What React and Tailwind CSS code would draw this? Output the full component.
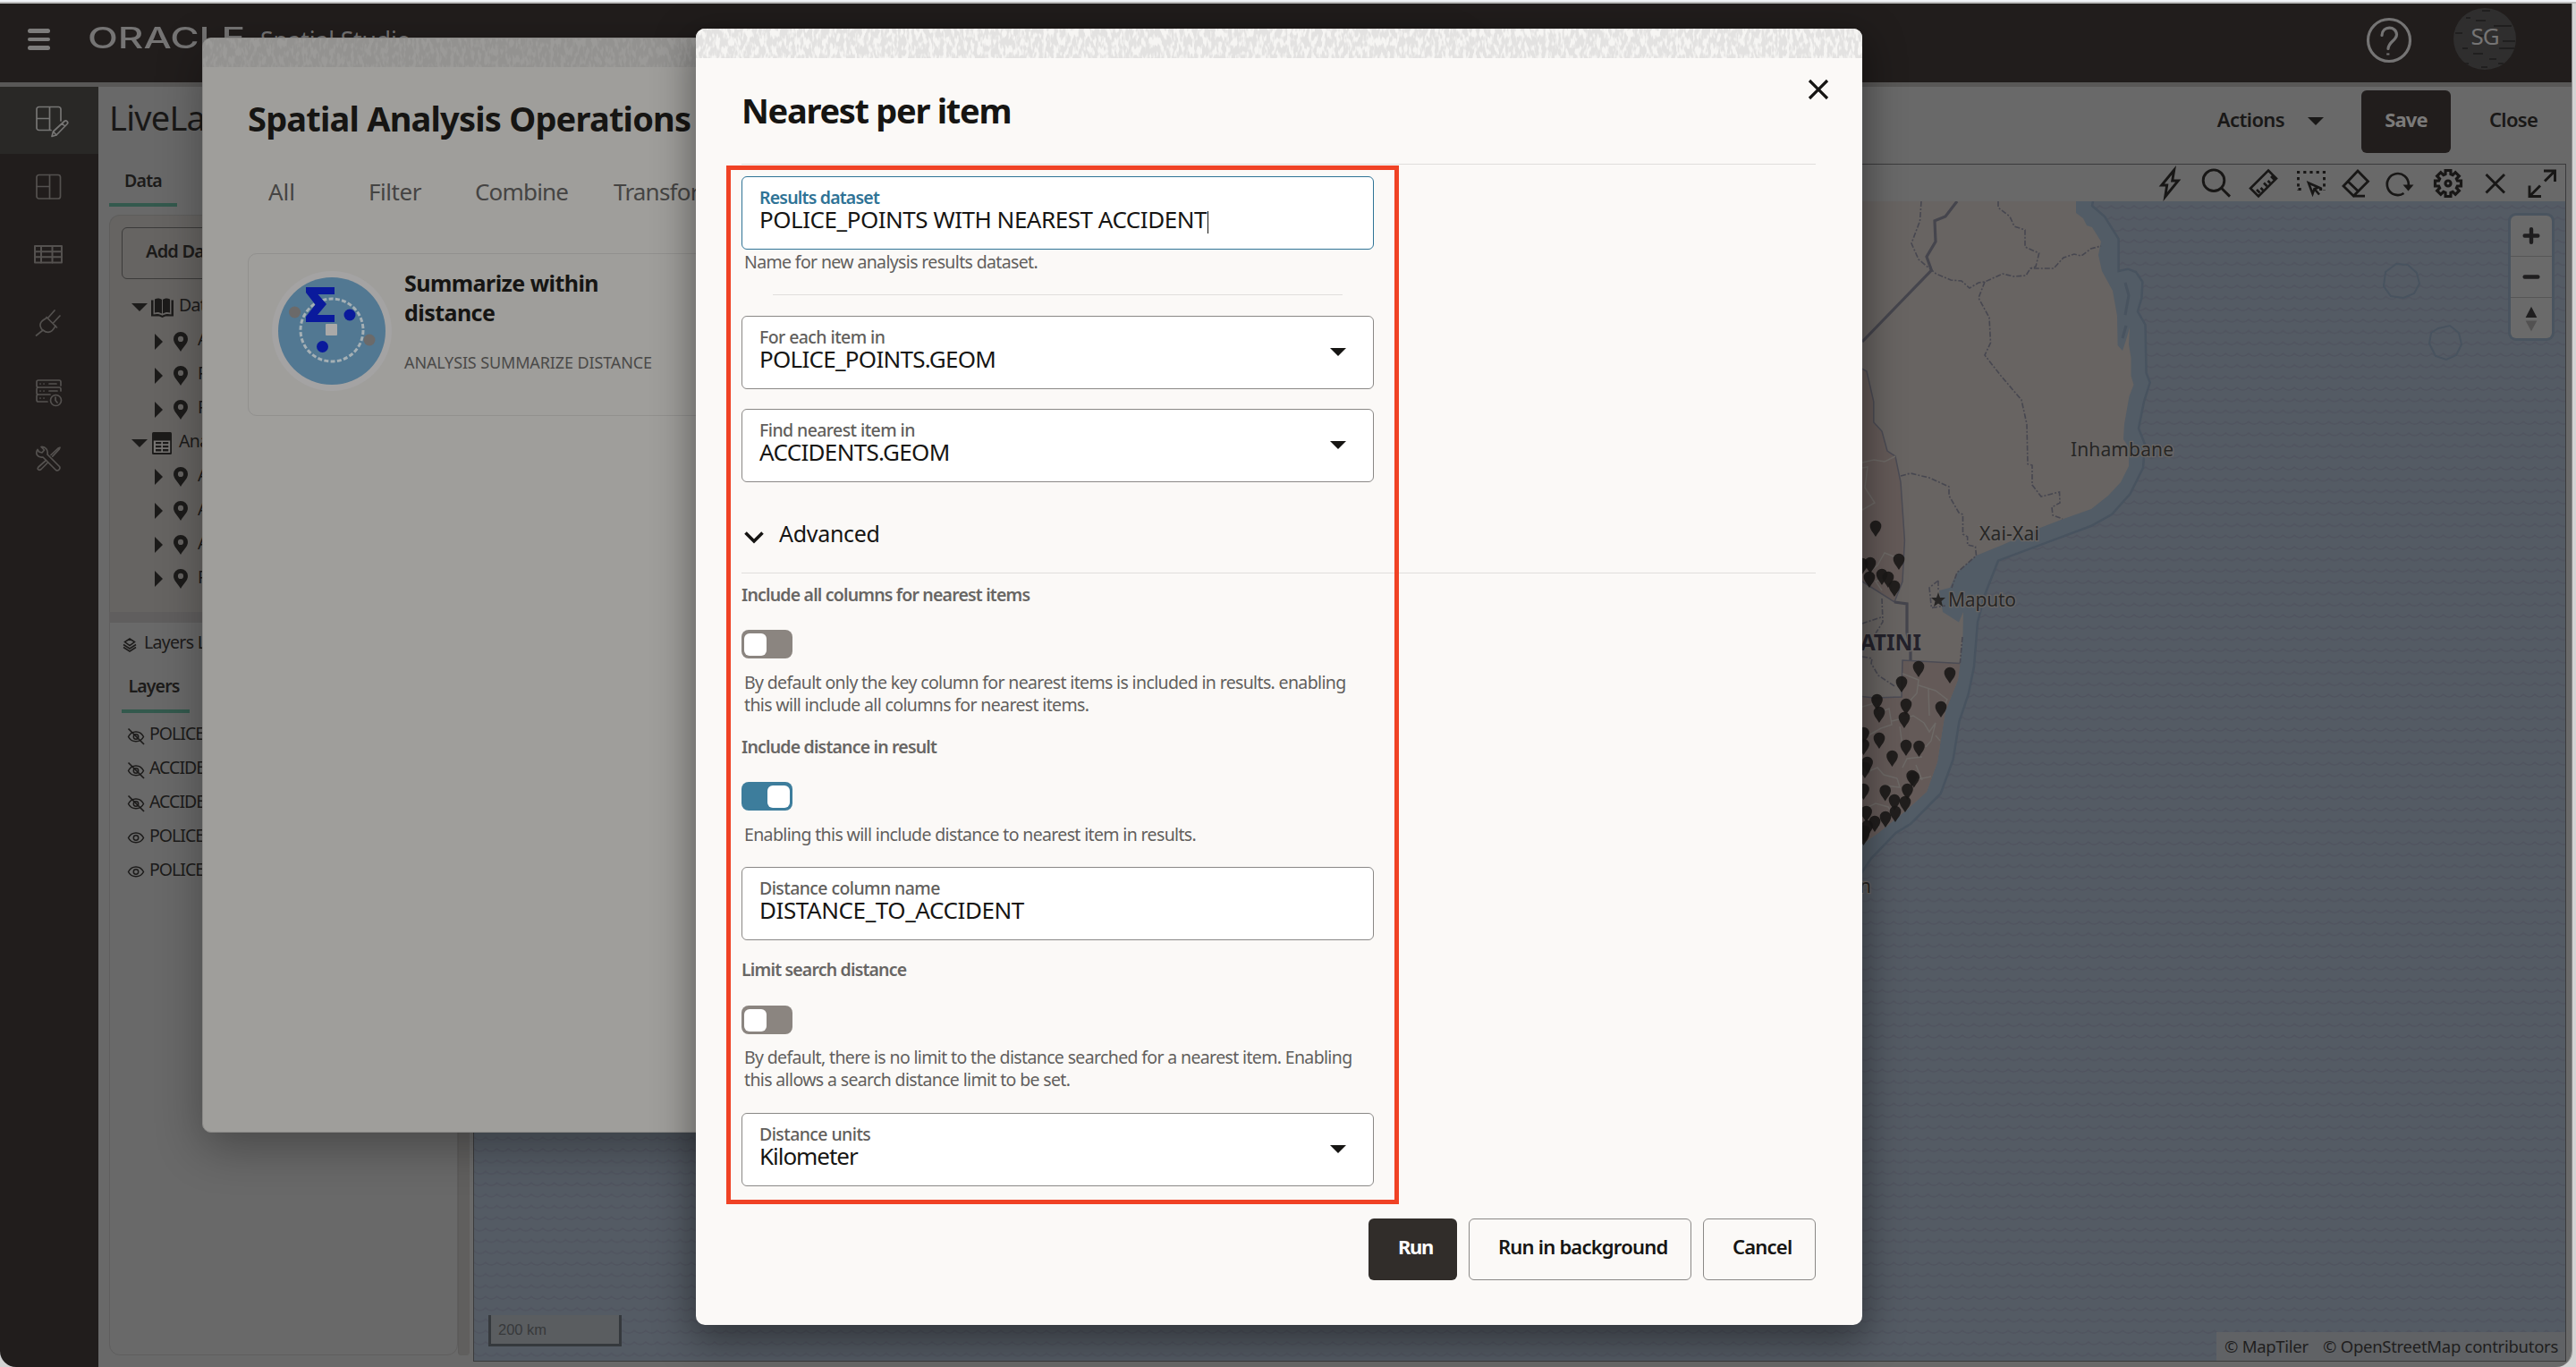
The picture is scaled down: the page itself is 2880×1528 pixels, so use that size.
import React from "react";

const SANS = "font-['Noto_Sans','Open_Sans',sans-serif]";

/* ---------- small shared pieces ---------- */

function Caret({ className = "" }) {
  return (
    <svg viewBox="0 0 18 9" className={`h-[9px] w-[18px] shrink-0 ${className}`}>
      <path d="M0 0H18L9 9Z" fill="currentColor" />
    </svg>
  );
}

function Texture({ id, color, className }) {
  return (
    <svg className={className} preserveAspectRatio="none">
      <filter id={id} x="0" y="0" width="100%" height="100%" colorInterpolationFilters="sRGB">
        <feTurbulence type="fractalNoise" baseFrequency="0.26 0.1" numOctaves="2" seed="11" result="n" />
        <feColorMatrix in="n" type="matrix" values="0 0 0 0 1  0 0 0 0 1  0 0 0 0 1  6 0 0 0 -2.300" result="m" />
        <feFlood floodColor={color} />
        <feComposite operator="in" in2="m" />
      </filter>
      <rect width="100%" height="100%" filter={`url(#${id})`} />
    </svg>
  );
}

/* ---------- side navigation ---------- */

const iconProps = { fill: "none", stroke: "currentColor", strokeWidth: 1.7, strokeLinejoin: "round", strokeLinecap: "round" };

function EditProjectIcon() {
  return (
    <svg viewBox="0 0 40 40" className="h-10 w-10" {...iconProps}>
      <path d="M28 18V5a2.5 2.5 0 0 0-2.500-2.500H3.500A2.500 2.500 0 0 0 1 5v21a2.500 2.500 0 0 0 2.500 2.500H17M15.500 2.500v26M1 15.500h14.500" />
      <path d="m18 35.500 1.500-5.500L32 18.500a2.200 2.200 0 0 1 3.200 3L23 34ZM29.500 21l3 3M19.500 30l3.500 4" />
    </svg>
  );
}
function ProjectIcon() {
  return (
    <svg viewBox="0 0 40 40" className="h-10 w-10" {...iconProps}>
      <rect x="1" y="2.500" width="26.500" height="26.500" rx="2.500" />
      <path d="M15.500 2.500V29M1 15.500h14.500" />
    </svg>
  );
}
function TableIcon() {
  return (
    <svg viewBox="0 0 40 40" className="h-10 w-10" {...iconProps} strokeWidth="2">
      <rect x="-1" y="6" width="30" height="18.500" />
      <path d="M-1 12.200h30M-1 18.300h30M6 6v18.500M18.500 6v18.500" />
    </svg>
  );
}
function PlugIcon() {
  return (
    <svg viewBox="0 0 40 40" className="h-10 w-10" {...iconProps}>
      <path d="m12 9.500 11.500 11.500M21 2l-7.500 8.500M27 8l-7.500 8M8 24.500C2 18 5.500 14 12 10.500M8 24c6.500 5 11 1.500 14-5M8 24l-7.500 6" />
    </svg>
  );
}
function JobsIcon() {
  return (
    <svg viewBox="0 0 40 40" className="h-10 w-10" {...iconProps}>
      <path d="M13 28H3a2 2 0 0 1-2-2v-4a2 2 0 0 1 2-2h11M3 12a2 2 0 0 1-2-2V6a2 2 0 0 1 2-2h23a2 2 0 0 1 2 2v4M3 12h23a2 2 0 0 1 2 2v2M3 12a2 2 0 0 0-2 2v4a2 2 0 0 0 2 2h13" />
      <path d="M5 8h.1M9 8h.1M5 16h.1M9 16h.1M5 24h.1M9 24h.1M15 8h8M15 16h9" />
      <circle cx="22.500" cy="26.500" r="6" />
      <path d="M22 23v3.500l2 2.500" />
    </svg>
  );
}
function ToolsIcon() {
  return (
    <svg viewBox="0 0 40 40" className="h-10 w-10" {...iconProps}>
      <path d="M6 2.500 9.500 6 7 9 3.500 8 2 5.500C-1 10 2 15 8 14L22.500 28.500c2.500 1.500 5.500-1.500 4-4L13 11c1-5-2-9-7-8.500Z" />
      <path d="m17 11.500 8-7.500 2-.800-.8 2-7.500 8M11.500 17.500 3 25c-2 2.500.5 4.500 3 2.500l7.500-7.500" />
    </svg>
  );
}

function SideNav() {
  const items = [EditProjectIcon, ProjectIcon, TableIcon, PlugIcon, JobsIcon, ToolsIcon];
  return (
    <nav className="flex w-[110px] shrink-0 flex-col bg-[#211d1c]">
      {items.map((Icon, i) => (
        <div
          key={i}
          className={
            i === 0
              ? "flex h-[75px] items-start bg-[#292826] pt-[20px] pl-10 text-[#767574]"
              : "flex h-[76px] items-start pt-[21px] pl-10 text-[#54514f]"
          }
        >
          <div className="[&>svg]:overflow-visible">
            <Icon />
          </div>
        </div>
      ))}
    </nav>
  );
}

/* ---------- header ---------- */

function Header() {
  return (
    <header className="flex h-[93px] shrink-0 items-start border-b-[5px] border-[#595857] bg-[#211d1c] text-[#757474]">
      <div className="mt-[28px] ml-[31px] flex w-[25px] flex-col gap-[5px]">
        <div className="h-[4.500px] rounded-full bg-[#7d7c7b]" />
        <div className="h-[4.500px] rounded-full bg-[#7d7c7b]" />
        <div className="h-[4.500px] rounded-full bg-[#7d7c7b]" />
      </div>
      <div className="mt-[18px] ml-[42px] w-[193px] font-['Inter',sans-serif] text-[32px] leading-[42px] font-medium">
        <span className="inline-block origin-left scale-x-[1.380]">ORACLE</span>
      </div>
      <div className="mt-[22px] text-[26.500px] leading-[38px] tracking-[-0.005em]">Spatial Studio</div>
      <div className="mr-[62px] ml-auto flex items-start gap-[46px]">
        <svg viewBox="0 0 52 52" className="mt-[15px] h-[52px] w-[52px]" fill="none" stroke="currentColor" strokeWidth="3.200">
          <circle cx="26" cy="26" r="23.500" />
          <path d="M18 20.500c.5-11 16-11 16.500-1 0 7-9 7.500-9.500 16" strokeLinecap="round" />
          <path d="M24.800 40.500v2" />
        </svg>
        <div className="relative mt-[5px] flex h-[69px] w-[70px] justify-center overflow-hidden rounded-full bg-[#2f2e2e]">
          <svg viewBox="0 0 70 70" className="absolute inset-0" stroke="#201f1f" strokeWidth="2" fill="none">
            <path d="M32 3h9M25 14h11M45 20h20M2 28h8M28 31h6M55 37h14M10 45h6M51 45h17M22 51h11M40 57h8M12 62h5M50 62h6M31 66h7M14 11h5" />
          </svg>
          <span className="relative mt-[12px] text-[26px] leading-[38px] tracking-[-0.040em]">SG</span>
        </div>
      </div>
    </header>
  );
}

/* ---------- left data / layers panels ---------- */

function PinIcon() {
  return (
    <svg viewBox="0 0 16 22" className="h-[22px] w-4 shrink-0">
      <path fillRule="evenodd" fill="currentColor" d="M8 0a8 8 0 0 1 8 8c0 5-5 8.500-8 14C5 16.500 0 13 0 8a8 8 0 0 1 8-8Zm0 4.800a3.100 3.100 0 1 0 0 6.200 3.100 3.100 0 0 0 0-6.200Z" />
    </svg>
  );
}

function TreeGroup({ icon, label }) {
  return (
    <div className="flex h-[37.900px] items-center">
      <Caret className="ml-[11px]" />
      <div className="mr-[6px] ml-1 flex w-[25px]">{icon}</div>
      <span className="pb-[5px] text-[19.500px] leading-[28px] tracking-[-0.035em] whitespace-nowrap">{label}</span>
    </div>
  );
}

function TreeLeaf({ label }) {
  return (
    <div className="flex h-[37.900px] items-center">
      <svg viewBox="0 0 9 18" className="ml-[37px] h-[18px] w-[9px] shrink-0">
        <path d="M0 0 9 9 0 18Z" fill="currentColor" />
      </svg>
      <div className="mr-[11px] ml-[12px] flex">
        <PinIcon />
      </div>
      <span className="pb-[5px] text-[19.500px] leading-[28px] tracking-[-0.035em] whitespace-nowrap">{label}</span>
    </div>
  );
}

function EyeIcon({ off }) {
  return (
    <svg viewBox="0 0 20 20" className="h-5 w-5 shrink-0" fill="none" stroke="currentColor" strokeWidth="1.500">
      <path d="M1.500 10.500C5 3 15 3 18.500 10.500 15 17.500 5 17.500 1.500 10.500Z" />
      <circle cx="10" cy="10.500" r="2.700" />
      {off && <path d="M1.500 1.500 19 19" strokeWidth="1.700" />}
    </svg>
  );
}

function LeftPanels() {
  const layers = [
    ["POLICE_POINTS", true],
    ["ACCIDENTS", true],
    ["ACCIDENTS", true],
    ["POLICE_POINTS", false],
    ["POLICE_BOUNDS", false],
  ];
  return (
    <div className="flex w-[403px] shrink-0 flex-col text-[#1c1b1a]">
      <div className="flex h-[48px] w-[76px] justify-center border-b-4 border-[#33594d] pt-[4px] text-[19.500px] leading-[30px] font-semibold tracking-[-0.040em]">
        Data
      </div>
      <div className="mt-[9px] flex h-[1275px]">
        <div className="flex w-[390px] flex-col">
          <section className="h-[444px] overflow-hidden rounded-t-xl border border-b-0 border-[#5e5d5c] bg-[#666462] pt-[13px] pl-[13px]">
            <div className="flex h-[58px] w-[220px] items-center rounded-md border border-[#3c3b3a] pl-[26px] text-[20px] font-semibold tracking-[-0.040em]">
              <span className="pb-[4px]">Add Dataset</span>
            </div>
            <div className="mt-[13px]">
              <TreeGroup
                label="Datasets"
                icon={
                  <svg viewBox="0 0 25 22" className="h-[22px] w-[25px]" fill="currentColor">
                    <path d="M4 1.500C7 0 10 .5 12 2v15.500C9.500 16 7 15.500 4 16.500ZM21 1.500C18 0 15 .5 13 2v15.500c2.500-1.500 5-2 8-1ZM0 2.500h2.500v16c4-1 7-.5 10 1.300 3-1.800 6-2.300 10-1.300v-16H25v18h-9l-3.500 1.500-3.500-1.500H0Z" />
                  </svg>
                }
              />
              <TreeLeaf label="ACCIDENTS" />
              <TreeLeaf label="POLICE_BOUNDS" />
              <TreeLeaf label="POLICE_POINTS" />
              <TreeGroup
                label="Analyses"
                icon={
                  <svg viewBox="0 0 22 25" className="ml-px h-[25px] w-[22px]">
                    <rect width="22" height="25" rx="1.500" fill="currentColor" />
                    <path d="M1.800 9.500H20.200V23H1.800Z" fill="#777573" />
                    <path d="M4 11h6.300v2.300H4Zm8 0h6.300v2.300H12Zm-8 4h6.300v2.300H4Zm8 0h6.300v2.300H12Zm-8 4h6.300v2.500H4Zm8 0h6.300v2.500H12Z" fill="currentColor" />
                  </svg>
                }
              />
              <TreeLeaf label="ACCIDENTS" />
              <TreeLeaf label="ACCIDENTS" />
              <TreeLeaf label="ACCIDENTS" />
              <TreeLeaf label="POLICE_POINTS" />
            </div>
          </section>
          <div className="h-[11px] bg-[#605e5e]" />
          <section className="flex-1 overflow-hidden rounded-b-xl border border-[#5f5e5e] pl-[13px]">
            <div className="mt-[8px] flex items-center gap-[8px] pl-[1px]">
              <svg viewBox="0 0 16 16" className="mt-[5px] h-4 w-4" fill="none" stroke="currentColor" strokeWidth="1.500">
                <path d="M8 1 13.500 4.500 8 8.500 2.500 4.500ZM1 7.500l7 4.500 7-4.500M1 10.500 8 15l7-4.500" />
              </svg>
              <span className="text-[19.500px] leading-[28px] tracking-[-0.035em] whitespace-nowrap">Layers List</span>
            </div>
            <div className="mt-[23px] flex h-[42px] text-[19.500px] leading-[24px] tracking-[-0.045em]">
              <div className="flex w-[76px] justify-center border-b-4 border-[#33594d] pr-1 font-semibold">Layers</div>
              <div className="ml-[13px]">Legend</div>
            </div>
            <div className="mt-[7px] flex flex-col">
              {layers.map(([name, off], i) => (
                <div key={i} className="flex h-[37.800px] items-center gap-[5px] pl-[6px]">
                  <EyeIcon off={off} />
                  <span className="pb-[5px] text-[19.500px] leading-[28px] tracking-[-0.050em] whitespace-nowrap">{name}</span>
                </div>
              ))}
            </div>
          </section>
        </div>
        <div className="w-[13px] rounded-b-[4px] border-l border-[#5c5b5a] bg-[#605f5e]" />
      </div>
    </div>
  );
}

/* ---------- map ---------- */

const gear = (() => {
  const pts = [];
  const step = (Math.PI * 2) / 8;
  for (let i = 0; i < 8; i++) {
    const a = i * step - Math.PI / 2;
    [[-0.28, 10.8], [-0.2, 14.800], [0.2, 14.800], [0.28, 10.8]].forEach(([d, r]) =>
      pts.push(`${(15 + r * Math.cos(a + d)).toFixed(1)},${(16 + r * Math.sin(a + d)).toFixed(1)}`),
    );
  }
  return pts.join(" ");
})();

function MapToolbar() {
  const icons = [
    <path d="M20.700 1 6.700 18h6l-2 13L25.300 13h-6.600Z" />,
    <>
      <circle cx="13" cy="12.700" r="11.800" />
      <path d="m21.500 21.200 9.500 9.400" />
    </>,
    <path d="M22 1.500 31 10.500 11 30.500 2 21.500ZM9 23l3.500 3.500M13.500 21l2.500 2.500M17 15.500l3.500 3.500M21.500 13l2.500 2.500M25 8l3.500 3.500" strokeWidth="2.600" />,
    <>
      <path d="M2 3.500H34M3.500 9V24M32.500 9V24M3.500 22.500h7M27 22.500h4" strokeDasharray="3.200 4" />
      <path d="m15 15.500 11.500 5-5 1.500-2 5.500Zm6 6 6 7" strokeWidth="2.600" />
    </>,
    <path d="m18 2 11.500 11.700L13.300 30 2 19ZM7 13.700l11.500 11M13.300 30.200H26" strokeWidth="2.800" />,
    <>
      <path d="M17.500 27a12 12 0 1 1 5.300-10v2" strokeWidth="2.700" />
      <path d="M16.500 17.500h12l-6 7Z" fill="currentColor" stroke="none" />
    </>,
    <>
      <polygon points={gear} strokeWidth="3.200" />
      <circle cx="15" cy="16" r="3" strokeWidth="3.200" />
    </>,
    <path d="M5.500 6 26 26.500M26 6 5.500 26.500" />,
    <path d="M18 2H30.500V14M30 2.500 19 13.500M2 18.500v12h13M2.500 30 14 18.500" />,
  ];
  return (
    <div className="flex h-[41px] shrink-0 items-center justify-end gap-5 pr-[10px] text-[#181716]">
      {icons.map((icon, i) => (
        <svg key={i} viewBox="0 0 32 32" className="h-8 w-8 overflow-visible" fill="none" stroke="currentColor" strokeWidth="2.900">
          {icon}
        </svg>
      ))}
    </div>
  );
}

const PINS = [
  [2098, 588], [2124, 625], [2092, 629], [2083, 630], [2091, 645], [2105, 642], [2112, 645], [2119, 655],
  [2146, 745], [2181, 752], [2127, 762], [2099.5, 782], [2102, 796], [2132, 787], [2171, 790], [2130, 802],
  [2084.5, 819], [2084.5, 832], [2102, 825], [2132, 833], [2146.5, 834], [2116.5, 845], [2088.6, 852], [2086, 858],
  [2138.7, 867], [2140.8, 868.5], [2084.5, 882], [2108.7, 883.5], [2133.5, 882], [2119, 894], [2131, 896],
  [2087.6, 907], [2120, 907], [2109, 913], [2097, 918], [2088.6, 923], [2085.5, 929], [2084.5, 933],
];

const COAST =
  "L2322 225 2322 238 2330 244 2334 252 2340 254 2350 270 2347 285 2351 303 2363 325 2368 353 2368.600 386 2374 392 2378 380 2382 366 2381 385 2383.500 400 2383.500 420 2386.500 430 2381.500 443 2376 474 2375 491 2381 500 2381 521 2372 539 2358 554 2339 569 2308 580 2282 590 2240 609 2210.500 621 2189 640 2181 657 2169 660 2173 684 2191 695.500 2196 684 2195.500 711 2192.400 741.500 2190 760 2176 795 2171 826 2167 852 2155 885 2132 906 2101 931 2078 947";
const SHELF =
  "L2341 225 2340 230 2354 242 2369.600 267 2369.600 303 2380 300.700 2389 304 2396.400 315 2395.400 333 2391 348 2399.500 363 2400.600 417 2404.700 427.600 2398 449 2392 479 2399 496.500 2397 523 2382.500 552 2362 575 2338.600 588 2235 626.700 2220 665 2212 695.500 2208 745 2201.700 776 2191.400 806.500 2184.700 848.600 2170.700 887 2137 921 2120.600 931 2093 959.600 2078 982";

function MapCanvas() {
  return (
    <svg viewBox="531 225 2338 1296" className="block h-full w-full">
      <defs>
        <pattern id="waves" width="12.800" height="12.700" patternUnits="userSpaceOnUse" x="531" y="225">
          <path d="M-1 5.500 0 5Q6.400 11 12.800 5l1 .5" fill="none" stroke="#50545f" strokeWidth="1.700" />
        </pattern>
      </defs>
      <rect x="531" y="225" width="2338" height="1296" fill="#545b64" />
      <rect x="531" y="225" width="2338" height="1296" fill="url(#waves)" />
      <path d={`M2070 225${SHELF}L2070 990Z`} fill="#525c66" />
      <path d={`M2341 225${SHELF.slice(9)}`} fill="none" stroke="#48535f" strokeWidth="2.500" />
      <path d="M2680 295 2693 296 2703 305 2706 317 2700 328 2688 333 2674 331 2666 320 2668 304Z" fill="none" stroke="#48535f" strokeWidth="2" />
      <path d="M2727 367 2740 364 2750 372 2753 385 2747 397 2736 402 2724 398 2717 384 2719 372Z" fill="none" stroke="#48535f" strokeWidth="2" />
      <path d={`M2070 225${COAST}Z`} fill="#686462" />
      <path d="M2377 316 2381 330 2377 352M2378 364 2374 378" fill="none" stroke="#48535f" strokeWidth="3" />
      <path d="M2060 400 2088 415 2095.800 449 2095.800 472 2105 482 2111 504 2120 510 2126 539 2130.400 604 2128 650 2119 673 2083 650 2060 640Z" fill="#645a58" stroke="#4b4b54" strokeWidth="1.500" />
      <path d="M2060 776 2096 780 2127 779 2128 738 2192.400 741.500 2190 760 2176 795 2171 826 2167 852 2155 885 2132 906 2101 931 2078 947 2060 950Z" fill="#645a58" />
      <path d="M2060 776 2096 780 2127 779 2128 738 2192.400 741.500" fill="none" stroke="#4b4b54" strokeWidth="1.500" />
      <path d="M2083 517 2096 514 2108 516 2120 510M2083 523 2089 522 2086 545 2097 562 2083 570M2090 640 2100 632 2108 618 2118 622 2127 622M2105 660 2098 650 2110 646M2083 790 2100 785 2098 798 2113 792 2116 810 2104 814 2090 822M2128 753 2146 760 2144 775 2130 790M2146 766 2165 772 2178 782 2174 790M2157 770 2158 800M2116 806 2140 800 2152 808 2158 818 2165 808 2160 828 2154 835M2125 812 2128 835M2165 822 2170 828M2128 858 2133 848 2150 846M2083 865 2100 858 2107 866 2122 870M2122 870 2125 880 2108 878M2150 872 2143 855M2160 868 2140 872M2083 905 2098 898 2112 902 2118 912M2095 915 2102 925" fill="none" stroke="#6d6966" strokeWidth="1.500" />
      <g fill="none" stroke="#474750" strokeWidth="1.600" strokeDasharray="6 2 2 2">
        <path d="M2149 225 2147.500 247 2138 272 2146 290 2165.600 306 2182 313 2194 314 2203 322 2213 316 2220 315 2240 306 2252 309 2266 308 2271 300 2297 300 2308 288 2320 284 2328 286 2338.600 278 2350 275" />
        <path d="M2235 225V232L2248 242 2253 253 2265 257V276L2280.700 283 2277 298 2271 300" />
        <path d="M2220 315 2213 333 2225 355 2226.500 383 2220 397 2238 420 2261 447 2267 474 2268 518.700 2273 520V542L2283 555 2303.500 550 2304 562 2295 567 2296 576 2307 580" />
        <path d="M2126 532 2137 529 2158 534 2180 544V554L2191 573 2195.500 575V597L2200.700 600V609L2209.500 611 2210.500 621 2189 640 2183 657" />
        <path d="M2168 649 2158 657 2160.400 679.500 2176 677M2168 649V660M2105 669 2106 695 2098 708M2083 697 2104 690M2083 734 2094 736 2093 741.500 2101 755 2120 767.500M2195 712 2192.400 741" />
      </g>
      <path d="M2189 225 2176 242 2164 246.700 2165 270 2155 287 2160.400 302 2083 382M2119 673 2133 675V707L2137 726V738" fill="none" stroke="#45454d" strokeWidth="3.200" />
      <g className="font-['Noto_Sans',sans-serif]" fill="#272625">
        <g stroke="#6a6765" strokeWidth="2.500" paintOrder="stroke" fontSize="21">
          <text x="2316" y="510" textLength="115">Inhambane</text>
          <text x="2214" y="604" textLength="67">Xai-Xai</text>
          <text x="2179" y="678" textLength="76">Maputo</text>
          <text x="2093" y="998" textAnchor="end">Durban</text>
          <text x="2149" y="727" textAnchor="end" fontSize="24.500" fontWeight="700" fill="#24222b">ESWATINI</text>
        </g>
        <path d="M2168 662 2170 668 2176 668 2171.500 672 2173 678 2168 674.500 2163 678 2164.500 672 2160 668 2166 668Z" />
      </g>
      <g fill="#1b1918">
        {PINS.map(([x, y], i) => (
          <path key={i} opacity="0.920" transform={`translate(${x} ${y})`} d="M0 12C-3 7-6.300 4-6.300 0A6.300 6.300 0 0 1 6.300 0C6.300 4 3 7 0 12Z" />
        ))}
      </g>
    </svg>
  );
}

function MapView() {
  return (
    <div className="relative ml-1 flex h-[1339px] w-[2340px] shrink-0 flex-col border border-[#3b3b3c]">
      <MapToolbar />
      <div className="min-h-0 flex-1">
        <MapCanvas />
      </div>
      <div className="absolute top-[57px] right-[15px] flex w-[46px] flex-col divide-y divide-[#565656] rounded-md bg-[#6a6a6a] text-[#1f1e1f] ring-[3px] ring-[#4a545f]">
        <svg viewBox="0 0 46 46" className="h-[46px] w-[46px]" stroke="currentColor" strokeWidth="4.500" strokeLinecap="round">
          <path d="M15.500 23h15M23 15.500v15" />
        </svg>
        <svg viewBox="0 0 46 46" className="h-[46px] w-[46px]" stroke="currentColor" strokeWidth="4.500" strokeLinecap="round">
          <path d="M15.500 23h15" />
        </svg>
        <svg viewBox="0 0 46 46" className="h-[45px] w-[46px]">
          <path d="M23 10 29.500 22.500H16.500Z" fill="currentColor" />
          <path d="M23 38 29.500 26H16.500Z" fill="#525151" />
        </svg>
      </div>
      <div className="absolute bottom-[16px] left-[16px] h-[35px] w-[149px] border-[3px] border-t-0 border-[#35393d] bg-[#5a5d60] pl-2 font-['Liberation_Sans',sans-serif] text-[16.500px] leading-[32px] text-[#37393b]">
        200 km
      </div>
      <div className="absolute right-0 bottom-0 flex h-[32px] w-[390px] justify-between bg-[#606265] pr-2 pl-[9px] text-[18.500px] leading-[31px] tracking-[-0.015em] whitespace-nowrap text-[#1f1e1e]">
        <span>© MapTiler</span>
        <span>© OpenStreetMap contributors</span>
      </div>
    </div>
  );
}

/* ---------- project page ---------- */

function ProjectPage() {
  return (
    <main className="flex flex-1 flex-col bg-[#696969] pl-3">
      <div className="flex h-[86px] items-start pr-[32px] text-[22px] font-semibold tracking-[-0.036em] text-[#191817]">
        <h1 className="mt-[8px] text-[38px] leading-[52px] font-normal tracking-[-0.020em]">LiveLabs</h1>
        <div className="ml-auto flex">
          <div className="flex h-[76px] items-center">
            <span className="pb-[4px] tracking-[-0.028em]">Actions</span>
            <Caret className="ml-[26px]" />
          </div>
          <div className="mt-[4px] ml-[42px] flex h-[70px] w-[100px] justify-center rounded-md bg-[#211d1c] pt-[17px] leading-[30px] font-bold tracking-[-0.042em] text-[#7b7a79]">
            Save
          </div>
          <div className="mt-[21px] ml-[43px] w-[60px] leading-[30px] tracking-[-0.031em]">Close</div>
        </div>
      </div>
      <div className="flex">
        <LeftPanels />
        <MapView />
      </div>
    </main>
  );
}

/* ---------- operations dialog ---------- */

function OperationsDialog() {
  return (
    <div className="absolute top-[42px] left-[226px] h-[1224px] w-[1400px] overflow-hidden rounded-[10px] border border-[#8b8a88] bg-[#9f9e9b] text-[#161513]">
      <Texture id="tex-a" color="#939290" className="block h-[32px] w-full bg-[#9b9a98]" />
      <h2 className="mt-[31px] ml-[50px] text-[38px] leading-[52px] font-bold tracking-[-0.021em]">Spatial Analysis Operations</h2>
      <div className="mt-[38px] ml-[73px] flex text-[26px] leading-[36px] text-[#454443]">
        <span className="w-[112px]">All</span>
        <span className="w-[119px] tracking-[-0.017em]">Filter</span>
        <span className="w-[155px] tracking-[-0.032em]">Combine</span>
        <span className="tracking-[-0.030em]">Transform</span>
      </div>
      <div className="mt-[51px] ml-[50px] flex h-[182px] w-[600px] rounded-[10px] border border-[#91908e]">
        <svg viewBox="0 0 134 134" className="mt-[19px] ml-[26px] h-[134px] w-[134px]">
          <circle cx="67" cy="67" r="67" fill="#a4a3a3" />
          <circle cx="67" cy="67" r="60" fill="#527892" />
          <circle cx="67" cy="66" r="35" fill="none" stroke="#a5b0b5" strokeWidth="3" strokeDasharray="5 2.330" />
          <path d="M38 18H70V26H51.500L61 37 51 49H70V57H38V51L48.500 37.500 38 24Z" fill="#0a1a9c" />
          <rect x="60" y="59" width="13" height="13" rx="1" fill="#aaa9a8" />
          <circle cx="87" cy="49" r="6.500" fill="#0a1a9c" />
          <circle cx="56.500" cy="84.500" r="6.500" fill="#0a1a9c" />
          <circle cx="25.500" cy="46" r="6.500" fill="#6b6a6a" />
          <circle cx="109" cy="77" r="6.500" fill="#6b6a6a" />
        </svg>
        <div className="mt-[16px] ml-[14px] flex flex-col">
          <h3 className="text-[25px] leading-[33px] font-bold tracking-[-0.022em]">
            Summarize within
            <br />
            distance
          </h3>
          <p className="mt-[25px] text-[18px] leading-[28px] tracking-[-0.007em] text-[#4a4948]">ANALYSIS SUMMARIZE DISTANCE</p>
        </div>
      </div>
    </div>
  );
}

/* ---------- nearest-per-item dialog ---------- */

function Field({ label, children, select, focused, className = "" }) {
  return (
    <div
      className={`flex h-[82px] w-[707px] items-start justify-between rounded-md border bg-white pt-[11px] pr-[30px] pl-[19px] ${
        focused ? "border-[#2f7396]" : "border-[#8a8886]"
      } ${className}`}
    >
      <div className="flex flex-col">
        <span
          className={
            focused
              ? "text-[19.500px] leading-[24px] font-semibold tracking-[-0.041em] text-[#2f7396]"
              : "text-[19.500px] leading-[24px] font-medium tracking-[-0.030em] text-[#625f5d]"
          }
        >
          {label}
        </span>
        <span className="flex text-[26px] leading-[24px] whitespace-nowrap text-[#161513]">{children}</span>
      </div>
      {select && <Caret className="mt-[24px] text-[#161513]" />}
    </div>
  );
}

function Toggle({ on }) {
  return (
    <div
      className={
        on
          ? "flex h-8 w-[57px] items-center justify-end rounded-lg bg-[#3d7d9c] px-[3px]"
          : "flex h-8 w-[57px] items-center rounded-lg bg-[#8b8580] px-[3px]"
      }
    >
      <div className="h-[25px] w-[25px] rounded-md bg-white" />
    </div>
  );
}

function Label({ children, className }) {
  return <div className={`text-[19.500px] leading-[24px] font-semibold tracking-[-0.042em] text-[#686664] ${className}`}>{children}</div>;
}

function Help({ children, className = "" }) {
  return (
    <p className={`pl-[3px] text-[19.500px] leading-[25px] tracking-[-0.033em] whitespace-nowrap text-[#625f5d] ${className}`}>{children}</p>
  );
}

function NearestDialog() {
  return (
    <div className="absolute top-[32px] left-[778px] h-[1449px] w-[1304px] rounded-[10px] bg-[#fbf9f7] text-[#161513] shadow-[0_14px_44px_4px_rgba(0,0,0,0.42)]">
      <Texture id="tex-b" color="#e3e2e1" className="block h-[33px] w-full rounded-t-[10px] bg-[#f6f5f3]" />
      <div className="flex flex-col pr-[52px] pl-[51px]">
        <div className="flex h-[119px] items-start justify-between border-b border-[#e0dedc] pt-[36px]">
          <h2 className="text-[38px] leading-[44px] font-bold tracking-[-0.034em]">Nearest per item</h2>
          <svg viewBox="0 0 24 24" className="-mt-[13px] -mr-[15px] h-6 w-6" stroke="currentColor" strokeWidth="3.200">
            <path d="M2 2 22 22M22 2 2 22" />
          </svg>
        </div>

        <Field label="Results dataset" focused className="mt-[13px]">
          <span className="tracking-[-0.018em]">POLICE_POINTS WITH NEAREST ACCIDENT</span>
          <span className="mt-[3px] ml-[1px] h-[25px] w-px bg-[#161513]" />
        </Field>
        <Help className="mt-px">Name for new analysis results dataset.</Help>
        <div className="mt-[24px] ml-[35px] h-px w-[637px] bg-[#e0dedc]" />

        <Field label="For each item in" select className="mt-[23px]">
          <span className="tracking-[-0.028em]">POLICE_POINTS.GEOM</span>
        </Field>
        <Field label="Find nearest item in" select className="mt-[22px]">
          <span className="tracking-[-0.026em]">ACCIDENTS.GEOM</span>
        </Field>

        <div className="mt-[39px] flex h-[63px] items-start border-b border-[#e0dedc]">
          <svg viewBox="0 0 22 14" className="mt-[16px] ml-[3px] h-[14px] w-[22px]" fill="none" stroke="currentColor" strokeWidth="3.600">
            <path d="m1.500 1.500 9.500 9.500 9.500-9.500" />
          </svg>
          <span className="ml-[17px] text-[25px] leading-[36px] tracking-[-0.012em]">Advanced</span>
        </div>

        <Label className="mt-[12px]">Include all columns for nearest items</Label>
        <div className="mt-[27px]">
          <Toggle />
        </div>
        <Help className="mt-[14px]">
          By default only the key column for nearest items is included in results. enabling
          <br />
          this will include all columns for nearest items.
        </Help>

        <Label className="mt-[23px]">Include distance in result</Label>
        <div className="mt-[27px]">
          <Toggle on />
        </div>
        <Help className="mt-[14px]">Enabling this will include distance to nearest item in results.</Help>
        <Field label="Distance column name" className="mt-[24px]">
          <span className="tracking-[-0.016em]">DISTANCE_TO_ACCIDENT</span>
        </Field>

        <Label className="mt-[21px]">Limit search distance</Label>
        <div className="mt-[28px]">
          <Toggle />
        </div>
        <Help className="mt-[13px]">
          By default, there is no limit to the distance searched for a nearest item. Enabling
          <br />
          this allows a search distance limit to be set.
        </Help>
        <Field label="Distance units" select className="mt-[25px]">
          <span className="tracking-[-0.040em]">Kilometer</span>
        </Field>

        <div className="mt-[36px] flex justify-end gap-[13px] text-[22px] leading-[30px] font-semibold tracking-[-0.036em]">
          <button className="flex h-[69px] w-[99px] items-start rounded-md bg-[#312d2a] pt-[16px] pl-[33px] font-bold tracking-[-0.060em] text-white">
            Run
          </button>
          <button className="flex h-[69px] w-[249px] items-start rounded-md border border-[#8a8886] pt-[15px] pl-[32px] whitespace-nowrap">
            Run in background
          </button>
          <button className="flex h-[69px] w-[126px] items-start rounded-md border border-[#8a8886] pt-[15px] pl-[32px]">Cancel</button>
        </div>
      </div>
      <div className="pointer-events-none absolute top-[153px] left-[34px] h-[1161px] w-[752px] border-[5px] border-[#f04225]" />
    </div>
  );
}

export default function App() {
  return (
    <div className={`relative h-[1528px] w-[2880px] overflow-hidden bg-[#d3d3d3] antialiased ${SANS}`}>
      <div className="h-[2px] bg-[#f1f4f8]" />
      <div className="h-[2px] bg-[#bdbdbd]" />
      <div className="flex h-[1524px] w-[2876px] flex-col overflow-hidden rounded-b-[18px] border-r border-[#8c8c8c]">
        <Header />
        <div className="flex flex-1">
          <SideNav />
          <ProjectPage />
        </div>
      </div>
      <div className="absolute top-[42px] left-[226px] h-[1224px] w-[1400px] rounded-[10px] shadow-[0_16px_52px_rgba(0,0,0,0.32)]" />
      <OperationsDialog />
      <NearestDialog />
    </div>
  );
}
